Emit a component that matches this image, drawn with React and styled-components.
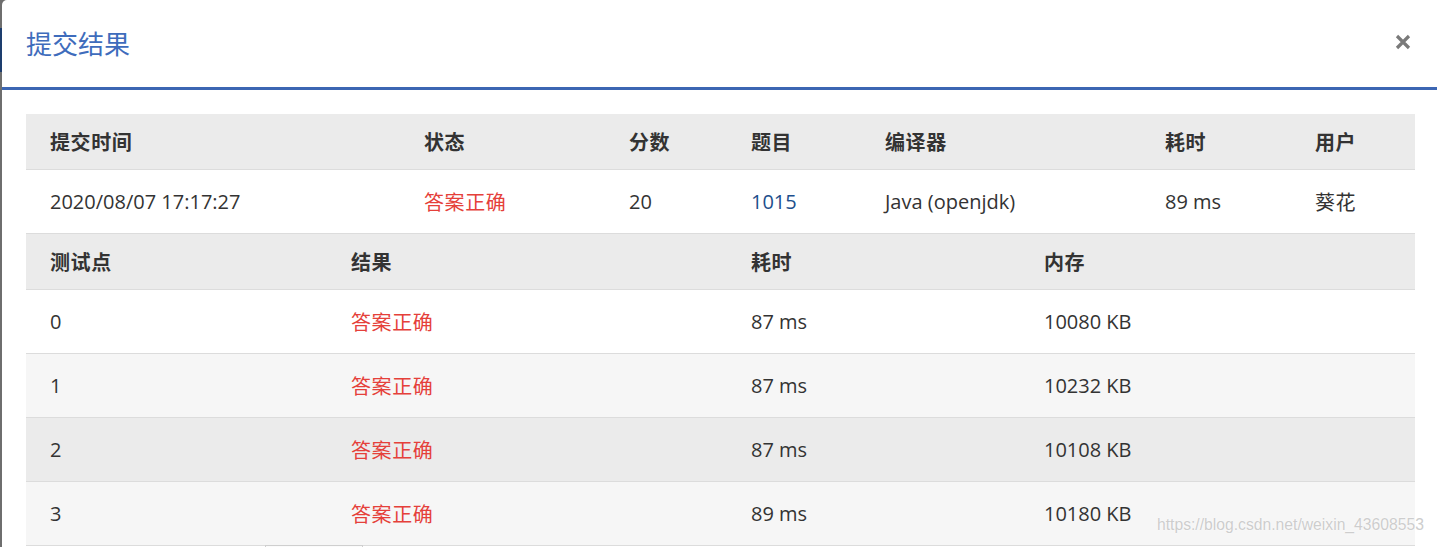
import React from "react";
import styled, { createGlobalStyle } from "styled-components";

const Global = createGlobalStyle`
  html, body {
    margin: 0;
    padding: 0;
    overflow: hidden;
    height: 547px;
  }
  body {
    background: linear-gradient(to bottom, #6e6e6e 0, #6e6e6e 28px, #1d3d6e 28px, #1d3d6e 72px, #6e6e6e 72px);
    font-family: "Open Sans", "Noto Sans CJK SC", sans-serif;
  }
`;

const Modal = styled.div`
  position: relative;
  margin-left: 2px;
  width: 1437px;
  height: 560px;
  background: #fff;
  border-top-left-radius: 5px;
  overflow: hidden;
`;

const Header = styled.div`
  border-bottom: 3px solid #3c66b3;
  display: flex;
  align-items: center;
  justify-content: space-between;
  padding: 0 28px 0 24px;
  box-sizing: border-box;
  height: 90px;
`;

const Title = styled.h4`
  margin: 0;
  margin-top: -2px;
  font-family: "Noto Sans CJK SC", sans-serif;
  font-size: 26px;
  font-weight: 400;
  color: #3e6cbc;
  line-height: 1;
`;

const Close = styled.button`
  border: 0;
  background: none;
  padding: 0;
  width: 16px;
  height: 16px;
  margin-top: -4px;
  display: flex;
  cursor: pointer;
`;

const Body = styled.div`
  padding: 24px 24px 0 24px;
`;

const Row = styled.div`
  display: grid;
  grid-template-columns: ${(p) => p.$cols};
  align-items: center;
  height: ${(p) => (p.$head ? "55px" : "63px")};
  border-bottom: 1px solid #dcdcdc;
  background: ${(p) => p.$bg || "#fff"};
`;

const Cell = styled.div`
  padding-left: 24px;
  font-size: 20px;
  line-height: 28px;
  color: ${(p) => p.$color || "#333"};
  font-weight: ${(p) => (p.$bold ? 700 : 400)};
  white-space: nowrap;
  letter-spacing: ${(p) => (p.$cjk ? "0.6px" : "0")};
  font-family: ${(p) =>
    p.$cjk ? '"Noto Sans CJK SC", sans-serif' : '"Open Sans", "Noto Sans CJK SC", sans-serif'};
`;

const Watermark = styled.div`
  position: absolute;
  left: 1155px;
  top: 516px;
  font-family: "Liberation Sans", Arial, sans-serif;
  font-size: 15.7px;
  color: #cdcdcd;
  text-shadow: 0 0 1px #fff, 0 0 2px #fff;
`;

const BottomTab = styled.div`
  position: absolute;
  left: 263px;
  top: 545px;
  width: 96px;
  height: 10px;
  background: #fbfbfb;
  border: 1px solid #cfcfcf;
`;

const RED = "#e5403a";
const BLUE = "#1d4f8c";

const cols1 = "374px 205px 122px 134px 280px 150px 1fr";
const cols2 = "301px 400px 293px 1fr";

const tests = [
  { id: "0", t: "87 ms", m: "10080 KB", bg: "#fff" },
  { id: "1", t: "87 ms", m: "10232 KB", bg: "#f6f6f6" },
  { id: "2", t: "87 ms", m: "10108 KB", bg: "#ebebeb" },
  { id: "3", t: "89 ms", m: "10180 KB", bg: "#f6f6f6" },
];

export default function App() {
  return (
    <>
      <Global />
      <Modal>
        <Header>
          <Title>提交结果</Title>
          <Close aria-label="close">
            <svg width="16" height="16" viewBox="0 0 16 16">
              <path d="M2 2L14 14M14 2L2 14" stroke="#7a7a7a" strokeWidth="3.2" strokeLinecap="butt" />
            </svg>
          </Close>
        </Header>
        <Body>
          <Row $cols={cols1} $head $bg="#ebebeb">
            <Cell $bold $cjk>提交时间</Cell>
            <Cell $bold $cjk>状态</Cell>
            <Cell $bold $cjk>分数</Cell>
            <Cell $bold $cjk>题目</Cell>
            <Cell $bold $cjk>编译器</Cell>
            <Cell $bold $cjk>耗时</Cell>
            <Cell $bold $cjk>用户</Cell>
          </Row>
          <Row $cols={cols1}>
            <Cell>2020/08/07 17:17:27</Cell>
            <Cell $color={RED} $cjk>答案正确</Cell>
            <Cell>20</Cell>
            <Cell $color={BLUE}>1015</Cell>
            <Cell>Java (openjdk)</Cell>
            <Cell>89 ms</Cell>
            <Cell $cjk>葵花</Cell>
          </Row>
          <Row $cols={cols2} $head $bg="#ebebeb">
            <Cell $bold $cjk>测试点</Cell>
            <Cell $bold $cjk>结果</Cell>
            <Cell $bold $cjk>耗时</Cell>
            <Cell $bold $cjk>内存</Cell>
          </Row>
          {tests.map((r) => (
            <Row key={r.id} $cols={cols2} $bg={r.bg}>
              <Cell>{r.id}</Cell>
              <Cell $color={RED} $cjk>答案正确</Cell>
              <Cell>{r.t}</Cell>
              <Cell>{r.m}</Cell>
            </Row>
          ))}
        </Body>
        <Watermark>https://blog.csdn.net/weixin_43608553</Watermark>
        <BottomTab />
      </Modal>
    </>
  );
}
